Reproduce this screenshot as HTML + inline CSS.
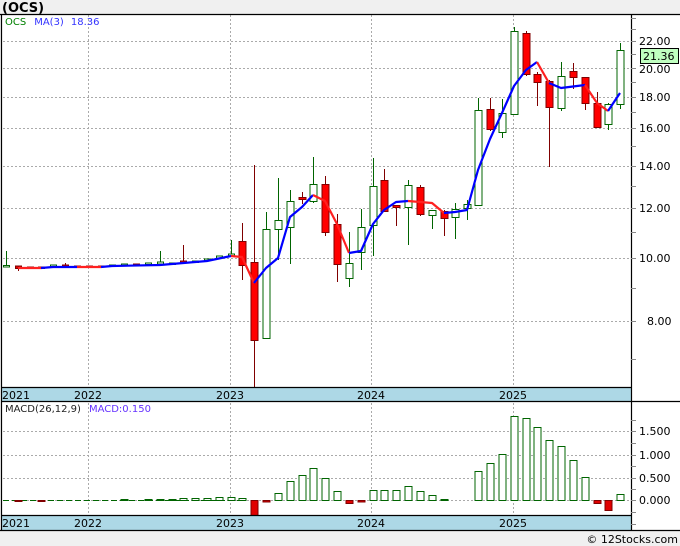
<!DOCTYPE html>
<html><head><meta charset="utf-8"><style>
html,body{margin:0;padding:0;background:#f0f0f0;}
svg{display:block;font-family:"DejaVu Sans","Liberation Sans",sans-serif;}
</style></head><body>
<svg width="680" height="546" viewBox="0 0 680 546" xmlns="http://www.w3.org/2000/svg">
<rect x="0" y="0" width="680" height="546" fill="#f0f0f0"/>
<text x="2" y="12" font-size="13" font-weight="bold" fill="#000">(OCS)</text>
<rect x="2" y="14" width="678" height="516" fill="#fff"/>
<g stroke="#aaa" stroke-dasharray="2,2" stroke-width="1">
<line x1="88.5" y1="15" x2="88.5" y2="530"/><line x1="230.5" y1="15" x2="230.5" y2="530"/><line x1="371.5" y1="15" x2="371.5" y2="530"/><line x1="513.5" y1="15" x2="513.5" y2="530"/>
<line x1="3" y1="41.5" x2="631" y2="41.5"/><line x1="3" y1="68.5" x2="631" y2="68.5"/><line x1="3" y1="97.5" x2="631" y2="97.5"/><line x1="3" y1="128.5" x2="631" y2="128.5"/><line x1="3" y1="166.5" x2="631" y2="166.5"/><line x1="3" y1="208.5" x2="631" y2="208.5"/><line x1="3" y1="258.5" x2="631" y2="258.5"/><line x1="3" y1="321.5" x2="631" y2="321.5"/>
<line x1="3" y1="431.5" x2="631" y2="431.5"/><line x1="3" y1="455.5" x2="631" y2="455.5"/><line x1="3" y1="478.5" x2="631" y2="478.5"/><line x1="3" y1="500.5" x2="631" y2="500.5"/>
</g>
<text x="5" y="25" font-size="10"><tspan fill="#008000">OCS</tspan><tspan fill="#3333ff" dx="8">MA(3)</tspan><tspan fill="#3333ff" dx="7">18.36</tspan></text>
<g stroke-width="1">
<g stroke="#006400" fill="#fff">
<line x1="6.5" y1="251" x2="6.5" y2="267"/><rect x="3.5" y="265.5" width="6" height="1.5"/>
<rect x="50.5" y="265" width="6" height="1.5"/>
<rect x="109.5" y="265" width="6" height="1.5"/>
<rect x="121.5" y="264" width="6" height="1.5"/>
<rect x="145.5" y="263" width="6" height="1.5"/>
<line x1="160.5" y1="251" x2="160.5" y2="264"/><rect x="157.5" y="262" width="6" height="2"/>
<rect x="169.5" y="263" width="6" height="1.5"/>
<rect x="192.5" y="261" width="6" height="1.5"/>
<rect x="204.5" y="259" width="6" height="1.5"/>
<rect x="216.5" y="256" width="6" height="2"/>
<line x1="231.5" y1="240" x2="231.5" y2="256"/><rect x="228.5" y="254" width="6" height="2"/>
</g>
<g stroke="#800000" fill="#e00000">
<rect x="15.5" y="266" width="6" height="2.5"/><line x1="18.5" y1="266" x2="18.5" y2="271"/>
<rect x="27.5" y="267" width="6" height="1.5"/>
<rect x="38.5" y="267" width="6" height="1.5"/>
<rect x="62.5" y="265" width="6" height="1.5"/><line x1="65.5" y1="263" x2="65.5" y2="268"/>
<rect x="74.5" y="266" width="6" height="1"/>
<rect x="86.5" y="266" width="6" height="1.5"/>
<rect x="98.5" y="266" width="6" height="1"/>
<rect x="133.5" y="264" width="6" height="1"/>
<line x1="183.5" y1="245" x2="183.5" y2="263"/><rect x="180.5" y="261" width="6" height="2"/>
</g>
<g stroke="#006400" fill="#fff">
<line x1="266.5" y1="212" x2="266.5" y2="229"/><rect x="263" y="229.5" width="7" height="109"/>
<line x1="278.5" y1="178" x2="278.5" y2="260"/><rect x="275" y="220.5" width="7" height="9"/>
<line x1="290.5" y1="190" x2="290.5" y2="264"/><rect x="287" y="201.5" width="7" height="26"/>
<line x1="313.5" y1="157" x2="313.5" y2="203"/><rect x="310" y="184.5" width="7" height="17"/>
<line x1="349.5" y1="232" x2="349.5" y2="287"/><rect x="346" y="263.5" width="7" height="15"/>
<line x1="361.5" y1="209" x2="361.5" y2="270"/><rect x="358" y="227.5" width="7" height="25"/>
<line x1="373.5" y1="158" x2="373.5" y2="256"/><rect x="370" y="186.5" width="7" height="39"/>
<line x1="408.5" y1="180" x2="408.5" y2="245"/><rect x="405" y="185.5" width="7" height="22"/>
<line x1="432.5" y1="210" x2="432.5" y2="229"/><rect x="429" y="210.5" width="7" height="5"/>
<line x1="455.5" y1="203" x2="455.5" y2="239"/><rect x="452" y="209.5" width="7" height="8"/>
<line x1="467.5" y1="200" x2="467.5" y2="220"/><rect x="464" y="204.5" width="7" height="4"/>
<line x1="478.5" y1="98" x2="478.5" y2="206"/><rect x="475" y="110.5" width="7" height="95"/>
<line x1="502.5" y1="99" x2="502.5" y2="138"/><rect x="499" y="113.5" width="7" height="19"/>
<line x1="514.5" y1="27" x2="514.5" y2="114"/><rect x="511" y="31.5" width="7" height="83"/>
<line x1="561.5" y1="62" x2="561.5" y2="111"/><rect x="558" y="76.5" width="7" height="32"/>
<line x1="608.5" y1="103" x2="608.5" y2="130"/><rect x="605" y="104.5" width="7" height="20"/>
<line x1="620.5" y1="43" x2="620.5" y2="109"/><rect x="617" y="50.5" width="7" height="54"/>
</g>
<g stroke="#800000" fill="#ff0000">
<line x1="242.5" y1="223" x2="242.5" y2="280"/><rect x="239" y="241.5" width="7" height="24"/>
<line x1="254.5" y1="165" x2="254.5" y2="387"/><rect x="251" y="262.5" width="7" height="78"/>
<line x1="302.5" y1="192" x2="302.5" y2="204"/><rect x="299" y="197.5" width="7" height="2"/>
<line x1="325.5" y1="176" x2="325.5" y2="236"/><rect x="322" y="184.5" width="7" height="48"/>
<line x1="337.5" y1="214" x2="337.5" y2="282"/><rect x="334" y="224.5" width="7" height="40"/>
<line x1="384.5" y1="169" x2="384.5" y2="211"/><rect x="381" y="180.5" width="7" height="31"/>
<line x1="396.5" y1="205" x2="396.5" y2="226"/><rect x="393" y="205.5" width="7" height="2"/>
<line x1="420.5" y1="185" x2="420.5" y2="216"/><rect x="417" y="187.5" width="7" height="27"/>
<line x1="444.5" y1="210" x2="444.5" y2="236"/><rect x="441" y="211.5" width="7" height="7"/>
<line x1="490.5" y1="98" x2="490.5" y2="131"/><rect x="487" y="109.5" width="7" height="20"/>
<line x1="526.5" y1="31" x2="526.5" y2="76"/><rect x="523" y="33.5" width="7" height="41"/>
<line x1="537.5" y1="72" x2="537.5" y2="106"/><rect x="534" y="74.5" width="7" height="8"/>
<line x1="549.5" y1="80" x2="549.5" y2="167"/><rect x="546" y="81.5" width="7" height="26"/>
<line x1="573.5" y1="63" x2="573.5" y2="89"/><rect x="570" y="71.5" width="7" height="6"/>
<line x1="585.5" y1="77" x2="585.5" y2="110"/><rect x="582" y="77.5" width="7" height="26"/>
<line x1="597.5" y1="92" x2="597.5" y2="128"/><rect x="594" y="103.5" width="7" height="24"/>
</g>
</g>
<g fill="none" stroke-width="2.2" stroke-linejoin="round">
<polyline stroke="#ff2020" points="18,268 30,268 41,268"/>
<polyline stroke="#0000ff" points="41,268 53,267 77,267"/>
<polyline stroke="#ff2020" points="77,267 101,267"/>
<polyline stroke="#0000ff" points="101,267 112,266 160,265 207,261 231,256"/>
<polyline stroke="#ff2020" points="231,256 242,257 254,283"/>
<polyline stroke="#0000ff" points="254,283 266,268 278,258 290,217 302,207 313,195"/>
<polyline stroke="#ff2020" points="313,195 325,201 337,224 349,253"/>
<polyline stroke="#0000ff" points="349,253 361,251 373,224 384,210 396,202 408,201"/>
<polyline stroke="#ff2020" points="408,201 420,202 432,203 444,213"/>
<polyline stroke="#0000ff" points="444,213 455,212 467,210 478,170 490,139 502,113 514,86 526,70 537,62"/>
<polyline stroke="#ff2020" points="537,62 549,83"/>
<polyline stroke="#0000ff" points="549,83 561,88 585,85"/>
<polyline stroke="#ff2020" points="585,85 597,103 608,111"/>
<polyline stroke="#0000ff" points="608,111 620,93"/>
</g>
<!-- MACD -->
<line x1="3" y1="500.5" x2="240" y2="500.5" stroke="#006400" stroke-width="1" stroke-dasharray="6,3"/>
<g stroke="#006400" fill="#fff">
<rect x="121" y="499.5" width="7" height="1"/>
<rect x="145" y="499.5" width="7" height="1"/>
<rect x="157" y="499.5" width="7" height="1"/>
<rect x="169" y="499.5" width="7" height="1"/>
<rect x="180" y="498.5" width="7" height="2"/>
<rect x="192" y="498.5" width="7" height="2"/>
<rect x="204" y="498.5" width="7" height="2"/>
<rect x="216" y="497.5" width="7" height="3"/>
<rect x="228" y="497.5" width="7" height="3"/>
<rect x="239" y="498.5" width="7" height="2"/>
<rect x="275" y="493.5" width="7" height="7"/>
<rect x="287" y="481.5" width="7" height="19"/>
<rect x="299" y="475.5" width="7" height="25"/>
<rect x="310" y="468.5" width="7" height="32"/>
<rect x="322" y="478.5" width="7" height="22"/>
<rect x="334" y="491.5" width="7" height="9"/>
<rect x="370" y="490.5" width="7" height="10"/>
<rect x="381" y="490.5" width="7" height="10"/>
<rect x="393" y="490.5" width="7" height="10"/>
<rect x="405" y="486.5" width="7" height="14"/>
<rect x="417" y="491.5" width="7" height="9"/>
<rect x="429" y="495.5" width="7" height="5"/>
<rect x="441" y="499.5" width="7" height="1"/>
<rect x="475" y="471.5" width="7" height="29"/>
<rect x="487" y="463.5" width="7" height="37"/>
<rect x="499" y="454.5" width="7" height="46"/>
<rect x="511" y="416.5" width="7" height="84"/>
<rect x="523" y="418.5" width="7" height="82"/>
<rect x="534" y="427.5" width="7" height="73"/>
<rect x="546" y="440.5" width="7" height="60"/>
<rect x="558" y="446.5" width="7" height="54"/>
<rect x="570" y="460.5" width="7" height="40"/>
<rect x="582" y="477.5" width="7" height="23"/>
<rect x="617" y="494.5" width="7" height="6"/>
</g>
<g fill="#e00000" stroke="#800000">
<rect x="15" y="500.5" width="7" height="1"/>
<rect x="38" y="500.5" width="7" height="1"/>
<rect x="251" y="500.5" width="7" height="15"/>
<rect x="263" y="500.5" width="7" height="1.5"/>
<rect x="346" y="500.5" width="7" height="3"/>
<rect x="358" y="500.5" width="7" height="1.5"/>
<rect x="594" y="500.5" width="7" height="3"/>
<rect x="605" y="500.5" width="7" height="10"/>
</g>
<text x="5" y="412" font-size="10"><tspan fill="#222">MACD(26,12,9)</tspan><tspan fill="#6633ff" dx="8">MACD:0.150</tspan></text>
<rect x="2" y="387" width="629" height="14" fill="#add8e6"/>
<rect x="2" y="515" width="629" height="15" fill="#add8e6"/>
<g stroke="#000" stroke-width="1.2">
<line x1="0" y1="14.5" x2="680" y2="14.5"/>
<line x1="1.5" y1="14" x2="1.5" y2="530"/>
<line x1="631.5" y1="14" x2="631.5" y2="530"/>
<line x1="2" y1="387.5" x2="631" y2="387.5"/>
<line x1="2" y1="401.5" x2="680" y2="401.5"/>
<line x1="2" y1="515.5" x2="631" y2="515.5"/>
<line x1="0" y1="530.5" x2="680" y2="530.5"/>
</g>
<g font-size="11" fill="#000">
<text x="2" y="399">2021</text><text x="74" y="399">2022</text><text x="216" y="399">2023</text><text x="357" y="399">2024</text><text x="499" y="399">2025</text>
<text x="2" y="527">2021</text><text x="74" y="527">2022</text><text x="216" y="527">2023</text><text x="357" y="527">2024</text><text x="499" y="527">2025</text>
</g>
<g stroke="#888" stroke-width="1">
<line x1="631" y1="18.5" x2="636" y2="18.5"/><line x1="631" y1="29.5" x2="636" y2="29.5"/><line x1="631" y1="41.5" x2="636" y2="41.5"/><line x1="631" y1="54.5" x2="636" y2="54.5"/><line x1="631" y1="68.5" x2="636" y2="68.5"/><line x1="631" y1="82.5" x2="636" y2="82.5"/><line x1="631" y1="97.5" x2="636" y2="97.5"/><line x1="631" y1="112.5" x2="636" y2="112.5"/><line x1="631" y1="128.5" x2="636" y2="128.5"/><line x1="631" y1="146.5" x2="636" y2="146.5"/><line x1="631" y1="166.5" x2="636" y2="166.5"/><line x1="631" y1="186.5" x2="636" y2="186.5"/><line x1="631" y1="208.5" x2="636" y2="208.5"/><line x1="631" y1="232.5" x2="636" y2="232.5"/><line x1="631" y1="258.5" x2="636" y2="258.5"/><line x1="631" y1="288.5" x2="636" y2="288.5"/><line x1="631" y1="321.5" x2="636" y2="321.5"/><line x1="631" y1="359.5" x2="636" y2="359.5"/>
<line x1="631" y1="420.5" x2="636" y2="420.5"/><line x1="631" y1="431.5" x2="636" y2="431.5"/><line x1="631" y1="443.5" x2="636" y2="443.5"/><line x1="631" y1="455.5" x2="636" y2="455.5"/><line x1="631" y1="466.5" x2="636" y2="466.5"/><line x1="631" y1="478.5" x2="636" y2="478.5"/><line x1="631" y1="489.5" x2="636" y2="489.5"/><line x1="631" y1="500.5" x2="636" y2="500.5"/><line x1="631" y1="512.5" x2="636" y2="512.5"/><line x1="631" y1="524.5" x2="636" y2="524.5"/>
</g>
<g font-size="11" fill="#000">
<text x="639" y="45">22.00</text><text x="639" y="73">20.00</text><text x="639" y="101">18.00</text><text x="639" y="132">16.00</text><text x="639" y="170">14.00</text><text x="639" y="212">12.00</text><text x="639" y="262">10.00</text><text x="647" y="325">8.00</text>
<text x="639" y="435">1.500</text><text x="639" y="459">1.000</text><text x="639" y="482">0.500</text><text x="639" y="504">0.000</text>
</g>
<rect x="640.5" y="48.5" width="38" height="15" fill="#c0ffc0" stroke="#000"/>
<text x="643" y="60" font-size="11" fill="#000">21.36</text>
<text x="678" y="543" font-size="11" fill="#000" text-anchor="end">© 12Stocks.com</text>
</svg>
</body></html>
